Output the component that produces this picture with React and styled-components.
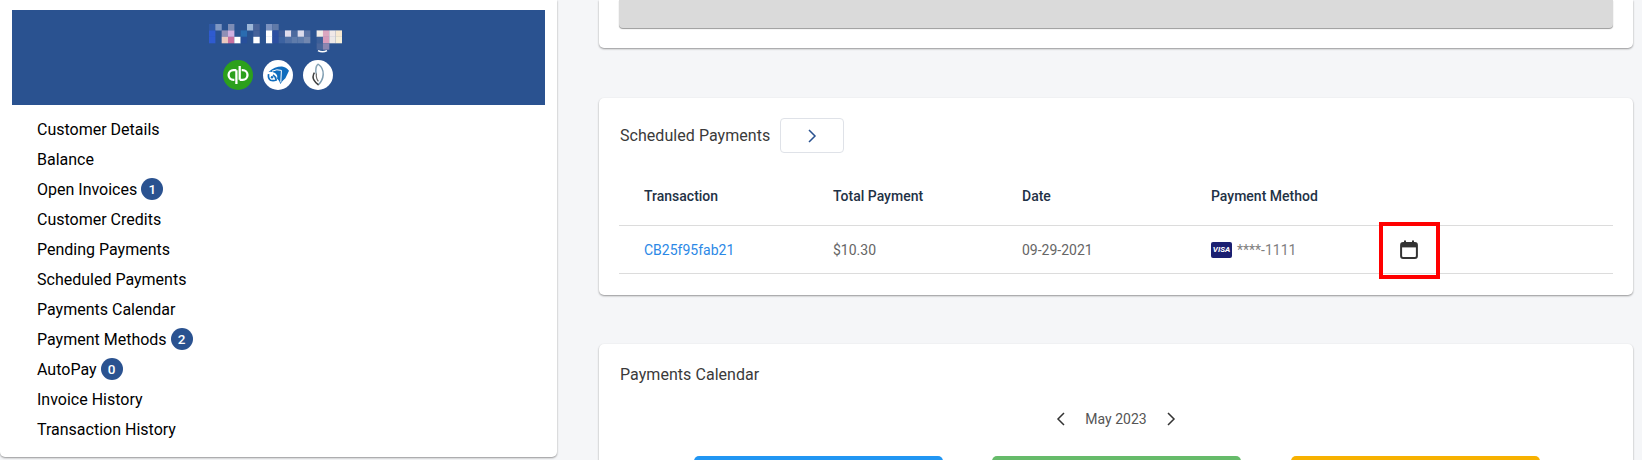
import styled, { createGlobalStyle } from "styled-components";

const GlobalStyle = createGlobalStyle`
  html, body {
    margin: 0;
    padding: 0;
    background-color: #f5f6f8;
  }
  body {
    font-family: Roboto, "Liberation Sans", sans-serif;
  }
`

const Page = styled.div`
  width: 1642px;
  height: 460px;
  overflow: hidden;
  display: flex;
  align-items: flex-start;
  background-color: #f5f6f8;
`
const Sidebar = styled.aside`
  width: 557px;
  height: 457px;
  box-sizing: border-box;
  flex-shrink: 0;
  padding: 10px 12px 0;
  background-color: #fff;
  border-radius: 0 0 5px 5px;
  box-shadow: 0 1px 2px rgba(0, 0, 0, 0.4);
`
const Banner = styled.div`
  height: 95px;
  box-sizing: border-box;
  padding-top: 14px;
  display: flex;
  flex-direction: column;
  align-items: center;
  gap: 6px;
  background-color: #2a5290;
`
const Mosaic = styled.svg`
  display: block;
  width: 139px;
  height: 30px;
`
const LogoRow = styled.div`
  display: flex;
  gap: 10px;
  margin-right: 1px;
`
const LogoBadge = styled.svg`
  display: block;
  width: 30px;
  height: 30px;
`
const Nav = styled.ul`
  margin: 9px 0 0;
  padding: 0 0 0 25px;
  list-style: none;
`
const NavItem = styled.li`
  height: 30px;
  display: flex;
  align-items: center;
  gap: 4px;
  font-size: 16px;
  color: #000;
`
const CountBadge = styled.span`
  width: 22px;
  height: 22px;
  display: flex;
  align-items: center;
  justify-content: center;
  border-radius: 50%;
  font-size: 13.5px;
  font-weight: 500;
  color: #fff;
  background-color: #2a5290;
`
const Main = styled.main`
  width: 1034px;
  margin-left: 42px;
  flex-shrink: 0;
  display: flex;
  flex-direction: column;
`
const Card = styled.section`
  background-color: #fff;
  border-radius: 5px;
  box-shadow: 0 1px 2px rgba(0, 0, 0, 0.4);
`
const TopCard = styled(Card)`
  height: 48px;
  box-sizing: border-box;
  padding: 0 20px 20px;
  border-radius: 0 0 5px 5px;
`
const GrayBox = styled.div`
  height: 28px;
  background-color: #dadada;
  border-radius: 0 0 4px 4px;
  box-shadow: 0 1px 1px rgba(0, 0, 0, 0.4);
`
const ScheduledCard = styled(Card)`
  margin-top: 50px;
  height: 197px;
  box-sizing: border-box;
  padding: 20px 20px 0;
`
const TitleRow = styled.div`
  display: flex;
  align-items: center;
  gap: 10px;
`
const Title = styled.h2`
  margin: 0;
  padding-left: 1px;
  font-size: 16px;
  font-weight: 400;
  letter-spacing: 0.05px;
  color: #3a3a3a;
`
const ArrowButton = styled.button`
  width: 64px;
  height: 35px;
  padding: 0;
  display: flex;
  align-items: center;
  justify-content: center;
  background-color: #fff;
  border: 1px solid #dfe2e8;
  border-radius: 4px;
  color: #2a5290;
`
const Row = styled.div`
  display: grid;
  grid-template-columns: repeat(3, 189px) 168px 1fr;
  padding-left: 25px;
  align-items: center;
`
const HeadRow = styled(Row)`
  height: 73px;
  padding-top: 14px;
  box-sizing: border-box;
  border-bottom: 1px solid #dcdcdc;
`
const BodyRow = styled(Row)`
  height: 48px;
  box-sizing: border-box;
  border-bottom: 1px solid #dcdcdc;
`
const HeadCell = styled.div`
  font-size: 14px;
  font-weight: 500;
  color: #1f3246;
`
const Cell = styled.div`
  font-size: 14px;
  color: #666;
`
const LinkCell = styled.a`
  font-size: 14px;
  color: #2b88e6;
  text-decoration: none;
`
const MethodCell = styled.div`
  display: flex;
  align-items: center;
  gap: 5px;
  font-size: 14px;
  color: #808080;
`
const Visa = styled.span`
  width: 21px;
  height: 16px;
  display: flex;
  align-items: center;
  justify-content: center;
  border-radius: 2px;
  font-size: 8px;
  font-weight: 700;
  font-style: italic;
  color: #fff;
  background-color: #1a1f71;
`
const CalendarCell = styled.div`
  position: relative;
  width: 60px;
  height: 47px;
  display: flex;
  align-items: center;
  justify-content: center;
  color: #333;
`
const Highlight = styled.div`
  position: absolute;
  left: 0;
  top: -4px;
  width: 61px;
  height: 57px;
  box-sizing: border-box;
  border: 4px solid #f00;
`
const CalendarCard = styled(Card)`
  margin-top: 49px;
  padding: 21px 20px 0;
  border-radius: 5px 5px 0 0;
`
const MonthNav = styled.div`
  margin-top: 26px;
  height: 18px;
  display: flex;
  align-items: center;
  justify-content: center;
  gap: 18px;
  color: #333;
`
const MonthLabel = styled.span`
  font-size: 14px;
  color: #555;
`
const Tiles = styled.div`
  margin-top: 28px;
  padding-left: 1px;
  display: grid;
  grid-template-columns: repeat(3, 249px);
  column-gap: 49.5px;
  justify-content: center;
`
const Tile = styled.div`
  height: 20px;
  border-radius: 5px 5px 0 0;
  background-color: ${(props) => props.$color};
`

const navItems = [
  { label: "Customer Details" },
  { label: "Balance" },
  { label: "Open Invoices", count: 1 },
  { label: "Customer Credits" },
  { label: "Pending Payments" },
  { label: "Scheduled Payments" },
  { label: "Payments Calendar" },
  { label: "Payment Methods", count: 2 },
  { label: "AutoPay", count: 0 },
  { label: "Invoice History" },
  { label: "Transaction History" },
];

// blurred name in the banner: [column, row, colour]
const mosaicCells = [
  [0, 0, "#2f59a6"], [1, 0, "#7f97c2"], [3, 0, "#7d8db5"], [6, 0, "#9db7d8"], [7, 0, "#4a6499"], [9, 0, "#7c93c0"], [10, 0, "#607aa8"],
  [0, 1, "#2f5bd0"], [2, 1, "#8f8fb5"], [3, 1, "#d0b0e0"], [5, 1, "#2a6cb0"], [7, 1, "#46639a"], [9, 1, "#fff"], [10, 1, "#2c4fa0"],
  [11, 1, "#3e5c98"], [12, 1, "#e0dcec"], [13, 1, "#4c6a9e"], [14, 1, "#dcdcec"], [15, 1, "#5a74a6"],
  [17, 1, "#f0ece8"], [18, 1, "#dba6c0"], [19, 1, "#f0e8e8"], [20, 1, "#f7e8d0"],
  [0, 2, "#2f5bd0"], [2, 2, "#eac9c0"], [3, 2, "#c66fa0"], [4, 2, "#fff"], [5, 2, "#274f9a"], [7, 2, "#fff"], [9, 2, "#fff"], [10, 2, "#2c4fa0"],
  [11, 2, "#3c62a0"], [12, 2, "#5170a5"], [13, 2, "#5f7cab"], [14, 2, "#5f7cab"], [15, 2, "#7288b0"],
  [17, 2, "#3c5f98"], [18, 2, "#d79cbc"], [19, 2, "#ece8e8"], [20, 2, "#f6eed8"],
  [17, 3, "#49659a"], [18, 3, "#8a86b0"],
];

function NameMosaic() {
  return (
    <Mosaic viewBox="0 0 139 30">
      {mosaicCells.map(([col, row, color]) => (
        <rect key={`${col}-${row}`} x={col * 6.33} y={row * 6.4} width="6.4" height="6.5" fill={color} />
      ))}
      <path d="M109 26.6q4.5 2.4 9 0" stroke="#fff" strokeWidth="1.6" fill="none" />
    </Mosaic>
  );
}

function QuickbooksLogo() {
  return (
    <LogoBadge viewBox="0 0 30 30">
      <circle cx="15" cy="15" r="15" fill="#2ca01c" />
      <g fill="none" stroke="#fff" strokeWidth="2.3">
        <path d="M13.4 10.2V24" />
        <path d="M13.4 10.2H10.4a4.8 4.8 0 0 0 0 9.6h1" />
        <path d="M16.7 6v13.8" />
        <path d="M16.7 19.8h3a4.8 4.8 0 0 0 0-9.6h-1" />
      </g>
    </LogoBadge>
  );
}

function CapLogo() {
  return (
    <LogoBadge viewBox="0 0 30 30">
      <circle cx="15" cy="15" r="15" fill="#fff" />
      <path d="M5.5 12Q12 6.4 19 6.6q4 .4 7 4.2l-3.6 7.4q-3 2.4-5 5.8-1-3.6-3.4-5.6 1.2-3-2-5.4-3.6-1.6-6.5-1z" fill="#0f6cbd" />
      <path d="M9 11.2q5-2.4 9.4-.8l-.6 12" fill="none" stroke="#fff" strokeWidth="1" />
      <path d="M5.6 14.2q-.8 4 1.8 6 3 .8 5.8-.2-.4-3.4-3.2-5" fill="none" stroke="#0f6cbd" strokeWidth="1.7" />
      <circle cx="9" cy="17.2" r="1.2" fill="#0f6cbd" />
    </LogoBadge>
  );
}

function WingLogo() {
  return (
    <LogoBadge viewBox="0 0 30 30">
      <circle cx="15" cy="15" r="15" fill="#fff" />
      <g fill="none">
        <path d="M15 4q5.6 4 5.2 10.6-.4 5.6-4.6 10" stroke="#7d9cb0" strokeWidth="1.5" />
        <path d="M15 4q-3.2 3.6-1.8 9.6" stroke="#8aa6b8" strokeWidth="1.5" />
        <path d="M11.4 12.6q-2.4 4-.4 7.6 1.8 3.2 4.6 4.8" stroke="#3f3f3f" strokeWidth="1.5" />
        <path d="M13.4 13.4q-.6 5 2 8" stroke="#666" strokeWidth="1.2" />
      </g>
    </LogoBadge>
  );
}

function Chevron({ direction, size }) {
  const d = direction === "left" ? "M9 1 3 7l6 6" : "M3 1l6 6-6 6";
  return (
    <svg width={size} height={(size * 14) / 12} viewBox="0 0 12 14" fill="none" stroke="currentColor" strokeWidth="1.5">
      <path d={d} />
    </svg>
  );
}

function CalendarIcon() {
  return (
    <svg width="18" height="19" viewBox="0 0 18 19" fill="none">
      <rect x="1.1" y="3.1" width="15.8" height="14.8" rx="2" stroke="currentColor" strokeWidth="2" />
      <path d="M1 4h16v3.4H1z" fill="currentColor" />
      <path d="M5 .6v3M13 .6v3" stroke="currentColor" strokeWidth="2" />
    </svg>
  );
}

function App() {
  return (
    <Page>
      <GlobalStyle />
      <Sidebar>
        <Banner>
          <NameMosaic />
          <LogoRow>
            <QuickbooksLogo />
            <CapLogo />
            <WingLogo />
          </LogoRow>
        </Banner>
        <Nav>
          {navItems.map((item) => (
            <NavItem key={item.label}>
              {item.label}
              {item.count !== undefined && <CountBadge>{item.count}</CountBadge>}
            </NavItem>
          ))}
        </Nav>
      </Sidebar>
      <Main>
        <TopCard>
          <GrayBox />
        </TopCard>
        <ScheduledCard>
          <TitleRow>
            <Title>Scheduled Payments</Title>
            <ArrowButton>
              <Chevron direction="right" size={12} />
            </ArrowButton>
          </TitleRow>
          <HeadRow>
            <HeadCell>Transaction</HeadCell>
            <HeadCell>Total Payment</HeadCell>
            <HeadCell>Date</HeadCell>
            <HeadCell>Payment Method</HeadCell>
          </HeadRow>
          <BodyRow>
            <div><LinkCell href="#">CB25f95fab21</LinkCell></div>
            <Cell>$10.30</Cell>
            <Cell>09-29-2021</Cell>
            <MethodCell>
              <Visa>VISA</Visa>
              ****-1111
            </MethodCell>
            <CalendarCell>
              <CalendarIcon />
              <Highlight />
            </CalendarCell>
          </BodyRow>
        </ScheduledCard>
        <CalendarCard>
          <Title>Payments Calendar</Title>
          <MonthNav>
            <Chevron direction="left" size={12} />
            <MonthLabel>May 2023</MonthLabel>
            <Chevron direction="right" size={12} />
          </MonthNav>
          <Tiles>
            <Tile $color="#2196f3" />
            <Tile $color="#66bb6a" />
            <Tile $color="#f7b100" />
          </Tiles>
        </CalendarCard>
      </Main>
    </Page>
  );
}

export default App;
